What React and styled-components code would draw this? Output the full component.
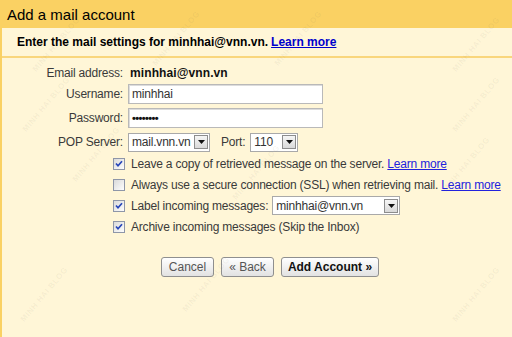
import React from "react";
import styled, { createGlobalStyle } from "styled-components";

const GlobalStyle = createGlobalStyle`
  html, body {
    margin: 0;
    padding: 0;
    background: #fff6d7;
  }
  body {
    font-family: "Liberation Sans", Arial, sans-serif;
    font-size: 12px;
    letter-spacing: -0.2px;
    color: #333;
  }
`;

const Page = styled.div`
  position: relative;
  width: 512px;
  height: 337px;
  overflow: hidden;
  background: #fff6d7;
  border-left: 2px solid #fad163;
  box-sizing: border-box;
`;

const Header = styled.div`
  height: 28px;
  margin-left: -2px;
  padding-left: 7px;
  background: #fad163;
  display: flex;
  align-items: center;
  font-size: 15px;
  letter-spacing: 0;
  color: #000;
`;

const SubHeader = styled.div`
  height: 28px;
  padding-left: 15px;
  display: flex;
  align-items: center;
  font-weight: bold;
  font-size: 12px;
  letter-spacing: 0;
  color: #000;
  border-bottom: 2px solid #f9d67c;
  gap: 3px;
`;

const Link = styled.a`
  color: ${(p) => (p.$strong ? "#0000cc" : "#2222dd")};
  text-decoration: underline;
  cursor: pointer;
`;

const Form = styled.div`
  padding-top: 8px;
  display: flex;
  flex-direction: column;
`;

const Row = styled.div`
  display: grid;
  grid-template-columns: 121px auto;
  column-gap: 5px;
  align-items: center;
  height: ${(p) => p.$h || 20}px;
  margin-bottom: 4px;
`;

const Label = styled.div`
  text-align: right;
  color: #3a3a3a;
`;

const Value = styled.div`
  padding-left: 2px;
  font-weight: bold;
  letter-spacing: 0.1px;
  color: #111;
`;

const TextInput = styled.div`
  width: 195px;
  height: 20px;
  box-sizing: border-box;
  background: #fff;
  border: 1px solid #b9b9b9;
  box-shadow: inset 1px 1px 0 #dcdcdc;
  padding-left: 3px;
  display: flex;
  align-items: center;
  color: #333;
`;

const Dots = styled.span`
  font-size: 11px;
  letter-spacing: -0.6px;
  color: #111;
  font-weight: bold;
`;

const Inline = styled.div`
  display: flex;
  align-items: center;
  gap: ${(p) => p.$gap || 0}px;
`;

const SelectBox = styled.div`
  width: ${(p) => p.$w}px;
  height: 19px;
  flex-shrink: 0;
  box-sizing: border-box;
  background: #fff;
  border: 1px solid #a9a9a9;
  display: flex;
  align-items: center;
  justify-content: space-between;
  padding-left: 3px;
  padding-right: 1px;
  color: #333;
`;

const Arrow = styled.div`
  width: 14px;
  height: 14px;
  box-sizing: border-box;
  border: 1px solid #8d8d8d;
  background: linear-gradient(#f6f6f6, #d9d9d9);
  display: flex;
  align-items: center;
  justify-content: center;
`;

const Checks = styled.div`
  margin-top: -3px;
  padding-left: 111px;
  display: flex;
  flex-direction: column;
`;

const CheckRow = styled.div`
  height: 21px;
  display: flex;
  align-items: center;
  gap: 6px;
  color: #3a3a3a;
  white-space: nowrap;
  svg {
    flex-shrink: 0;
  }
`;

const Buttons = styled.div`
  margin-top: 20px;
  padding-left: 159px;
  display: flex;
  gap: 7px;
`;

const Button = styled.div`
  width: ${(p) => p.$w}px;
  height: 20px;
  box-sizing: border-box;
  border: 1px solid #8f8f8f;
  border-radius: 3px;
  background: linear-gradient(#ffffff, #e2e2e2);
  display: flex;
  align-items: center;
  justify-content: center;
  letter-spacing: 0;
  font-weight: ${(p) => (p.$primary ? "bold" : "normal")};
  color: ${(p) => (p.$primary ? "#111" : "#555")};
`;

const Watermark = styled.div`
  position: absolute;
  font-size: 8px;
  font-weight: bold;
  letter-spacing: 0.5px;
  color: rgba(120, 110, 90, 0.08);
  transform: rotate(-50deg);
  white-space: nowrap;
  pointer-events: none;
`;

function Caret() {
  return (
    <Arrow>
      <svg width="7" height="4" viewBox="0 0 7 4">
        <path d="M0 0h7L3.5 4z" fill="#111" />
      </svg>
    </Arrow>
  );
}

function Select({ w, children }) {
  return (
    <SelectBox $w={w}>
      <span>{children}</span>
      <Caret />
    </SelectBox>
  );
}

function Checkbox({ checked }) {
  return (
    <svg width="12" height="12" viewBox="0 0 12 12">
      <defs>
        <linearGradient id="cbg" x1="0" y1="0" x2="1" y2="1">
          <stop offset="0" stopColor="#d8d8d8" />
          <stop offset="1" stopColor="#ffffff" />
        </linearGradient>
      </defs>
      <rect x="0.5" y="0.5" width="11" height="11" fill="url(#cbg)" stroke="#8e96a8" />
      {checked && (
        <path d="M3 5.5l2 2.2L9 3.2" fill="none" stroke="#2645b8" strokeWidth="1.7" />
      )}
    </svg>
  );
}

const marks = [
  [20, 40],
  [140, 34],
  [262, 34],
  [440, 40],
  [440, 100],
  [10, 100],
  [60, 150],
  [220, 168],
  [430, 160],
  [170, 280],
  [8, 290],
  [440, 290],
];

export default function App() {
  return (
    <>
      <GlobalStyle />
      <Page>
        <Header>Add a mail account</Header>
        <SubHeader>
          <span>Enter the mail settings for minhhai@vnn.vn.</span>
          <Link $strong>Learn more</Link>
        </SubHeader>
        <Form>
          <Row $h={14}>
            <Label>Email address:</Label>
            <Value>minhhai@vnn.vn</Value>
          </Row>
          <Row>
            <Label>Username:</Label>
            <TextInput>minhhai</TextInput>
          </Row>
          <Row>
            <Label>Password:</Label>
            <TextInput>
              <Dots>••••••••</Dots>
            </TextInput>
          </Row>
          <Row>
            <Label>POP Server:</Label>
            <Inline $gap={11}>
              <Select w={82}>mail.vnn.vn</Select>
              <Inline $gap={5}>
                <Label>Port:</Label>
                <Select w={48}>110</Select>
              </Inline>
            </Inline>
          </Row>
          <Checks>
            <CheckRow>
              <Checkbox checked />
              <span>
                Leave a copy of retrieved message on the server. <Link>Learn more</Link>
              </span>
            </CheckRow>
            <CheckRow>
              <Checkbox />
              <span>
                Always use a secure connection (SSL) when retrieving mail. <Link>Learn more</Link>
              </span>
            </CheckRow>
            <CheckRow>
              <Checkbox checked />
              <Inline $gap={4}>
                <span>Label incoming messages:</span>
                <Select w={128}>minhhai@vnn.vn</Select>
              </Inline>
            </CheckRow>
            <CheckRow>
              <Checkbox checked />
              <span>Archive incoming messages (Skip the Inbox)</span>
            </CheckRow>
          </Checks>
          <Buttons>
            <Button $w={53}>Cancel</Button>
            <Button $w={53}>« Back</Button>
            <Button $w={98} $primary>
              Add Account »
            </Button>
          </Buttons>
        </Form>
        {marks.map(([x, y], i) => (
          <Watermark key={i} style={{ left: x, top: y }}>
            MINH HAI BLOG
          </Watermark>
        ))}
      </Page>
    </>
  );
}
